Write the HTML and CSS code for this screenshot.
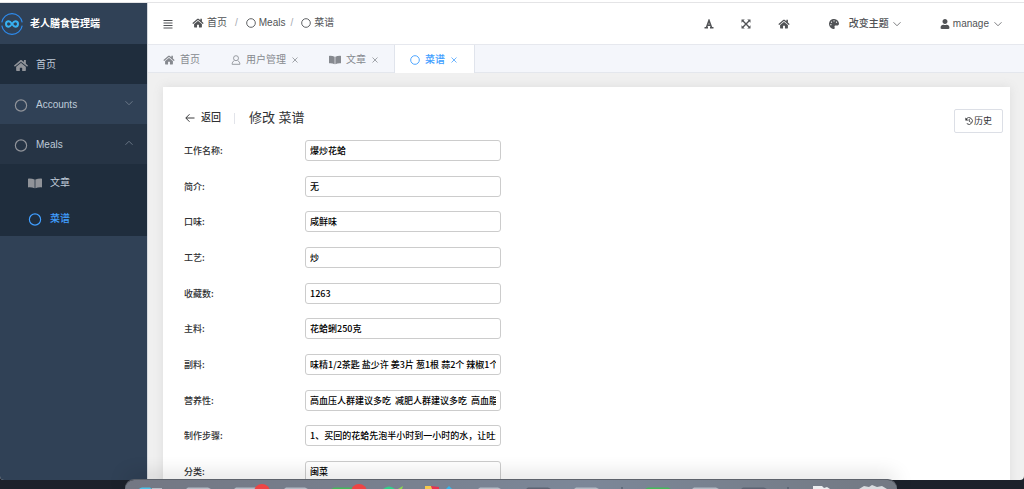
FILE: index.html
```html
<!DOCTYPE html>
<html lang="zh-CN">
<head>
<meta charset="utf-8">
<meta name="viewport" content="width=device-width, initial-scale=1">
<title>老人膳食管理端</title>
<link rel="stylesheet" href="styles.css">
</head>
<body>
<svg class="sprite" aria-hidden="true">
  <symbol id="home" viewBox="0 0 576 512"><path d="M488 312.700V456c0 13.300-10.700 24-24 24H348c-6.600 0-12-5.400-12-12V356c0-6.600-5.400-12-12-12h-72c-6.600 0-12 5.400-12 12v112c0 6.600-5.400 12-12 12H112c-13.300 0-24-10.700-24-24V312.700c0-3.600 1.600-7 4.400-9.300l188-154.800c4.400-3.600 10.800-3.600 15.300 0l188 154.800c2.700 2.300 4.300 5.700 4.300 9.300zm83.600-60.900L488 182.900V44.400c0-6.600-5.400-12-12-12h-56c-6.600 0-12 5.400-12 12V117l-89.500-73.700c-17.700-14.600-43.300-14.600-61 0L4.400 251.800c-5.100 4.200-5.800 11.800-1.600 16.900l25.500 31c4.200 5.100 11.800 5.800 16.900 1.600l235.200-193.700c4.400-3.600 10.800-3.600 15.300 0l235.200 193.700c5.100 4.200 12.700 3.500 16.900-1.600l25.500-31c4.200-5.200 3.400-12.700-1.700-16.900z" fill="currentColor"/></symbol>
  <symbol id="circle" viewBox="0 0 22 22"><circle cx="11" cy="11" r="9.500" fill="none" stroke="currentColor" stroke-width="2"/></symbol>
  <symbol id="book" viewBox="0 0 26 20"><path d="M0 2Q0 .8 1.200 .8C5 .6 9 1.200 12.300 2.800V19C9 17.500 5 17 1.200 17.200Q0 17.200 0 16ZM26 2Q26 .8 24.800 .8C21 .6 17 1.200 13.700 2.800V19C17 17.500 21 17 24.800 17.200Q26 17.200 26 16Z" fill="currentColor"/></symbol>
  <symbol id="person" viewBox="0 0 20 22"><g fill="none" stroke="currentColor" stroke-width="1.800"><circle cx="10" cy="7" r="5.500"/><path d="M6 12.500C3 14 1.500 17 1.500 20.500H18.500C18.500 17 17 14 14 12.500"/></g></symbol>
  <symbol id="user" viewBox="0 0 448 512"><path d="M224 256c70.700 0 128-57.300 128-128S294.700 0 224 0 96 57.300 96 128s57.300 128 128 128zm89.600 32h-16.700c-22.200 10.200-46.900 16-72.900 16s-50.600-5.800-72.900-16h-16.700C60.200 288 0 348.200 0 422.400V464c0 26.500 21.500 48 48 48h352c26.500 0 48-21.500 48-48v-41.600c0-74.200-60.200-134.400-134.400-134.400z" fill="currentColor"/></symbol>
  <symbol id="down" viewBox="0 0 16 16"><path d="M1 4.500L8 11.500L15 4.500" fill="none" stroke="currentColor" stroke-width="1.500"/></symbol>
  <symbol id="close" viewBox="0 0 12 12"><path d="M1 1L11 11M11 1L1 11" fill="none" stroke="currentColor" stroke-width="1.500"/></symbol>
  <symbol id="bars" viewBox="0 0 20 20"><path d="M1 3H19M1 8H19M1 13H19M1 18H19" stroke="currentColor" stroke-width="2"/></symbol>
  <symbol id="letter" viewBox="0 0 20 20"><path d="M5 17L10 3L15 17M7 12.500H13" fill="none" stroke="currentColor" stroke-width="3.200"/><path d="M1 17.600H8M12 17.600H19" stroke="currentColor" stroke-width="2.800"/></symbol>
  <symbol id="expand" viewBox="0 0 20 20"><path d="M4 4L16 16M16 4L4 16" stroke="currentColor" stroke-width="2.800"/><path d="M1 1H7.500L1 7.500ZM19 1V7.500L12.500 1ZM1 19V12.500L7.500 19ZM19 19H12.500L19 12.500Z" fill="currentColor"/></symbol>
  <symbol id="palette" viewBox="0 0 512 512"><path d="M204 5C105 24 25 104 5 203c-37 187 131 326 245 308 37-6 54-49 37-83-20-41 9-89 55-89h71c54 0 98-44 99-98C511 90 370-27 204 5zM96 320a32 32 0 1 1 0-64 32 32 0 0 1 0 64zm32-128a32 32 0 1 1 0-64 32 32 0 0 1 0 64zm128-64a32 32 0 1 1 0-64 32 32 0 0 1 0 64zm128 64a32 32 0 1 1 0-64 32 32 0 0 1 0 64z" fill="currentColor"/></symbol>
  <symbol id="back" viewBox="0 0 20 20"><path d="M19 10H2M9 2.500L1.500 10L9 17.500" fill="none" stroke="currentColor" stroke-width="1.900"/></symbol>
  <symbol id="history" viewBox="0 0 20 20"><path d="M3 5A8.500 8.500 0 1 1 4.500 16.500M10.500 5V10.500L14 13" fill="none" stroke="currentColor" stroke-width="2.200"/><path d="M1 1V8.500H8.500Z" fill="currentColor"/></symbol>
</svg>

<div class="window">
  <aside class="sidebar">
    <div class="brand">
      <svg class="brand-logo" viewBox="0 0 66 66" aria-hidden="true">
        <g fill="none" stroke="#2d8cf0" stroke-width="3.500">
          <path d="M2.400 28A31 31 0 0 1 63.600 28"/><path d="M2.400 38A31 31 0 0 0 63.600 38"/>
          <path d="M33 33C28 26 26 25 23 25A8 8 0 0 0 23 41C27 41 30 37 33 33C36 29 39 25 43 25A8 8 0 0 1 43 41C39 41 37 38 33 33" stroke="#38b2f2" stroke-width="6"/>
        </g>
      </svg>
      <span>老人膳食管理端</span>
    </div>
    <nav class="menu">
      <a class="item item-home" href="#"><svg class="icon-lg"><use href="#home"/></svg>首页</a>
      <a class="item" href="#"><svg class="icon-lg"><use href="#circle"/></svg>Accounts<svg class="arrow"><use href="#down"/></svg></a>
      <a class="item item-open" href="#"><svg class="icon-lg"><use href="#circle"/></svg>Meals<svg class="arrow arrow-up"><use href="#down"/></svg></a>
      <div class="submenu">
        <a class="item" href="#"><svg class="icon-lg"><use href="#book"/></svg>文章</a>
        <a class="item item-current" href="#"><svg class="icon-lg"><use href="#circle"/></svg>菜谱</a>
      </div>
    </nav>
  </aside>

  <div class="page">
    <header class="topbar">
      <button class="plain" aria-label="折叠菜单"><svg class="icon"><use href="#bars"/></svg></button>
      <nav class="crumbs">
        <a href="#"><svg class="icon-home"><use href="#home"/></svg>首页</a><span class="slash">/</span>
        <a href="#"><svg class="icon"><use href="#circle"/></svg>Meals</a><span class="slash slash-near">/</span>
        <a href="#"><svg class="icon"><use href="#circle"/></svg>菜谱</a>
      </nav>
      <div class="tools">
        <button class="plain" aria-label="字体"><svg class="icon"><use href="#letter"/></svg></button>
        <button class="plain" aria-label="全屏"><svg class="icon"><use href="#expand"/></svg></button>
        <button class="plain" aria-label="主页"><svg class="icon-home"><use href="#home"/></svg></button>
        <button class="plain theme"><svg class="icon"><use href="#palette"/></svg><span>改变主题</span><svg class="caret"><use href="#down"/></svg></button>
        <button class="plain account"><svg class="icon"><use href="#user"/></svg><span>manage</span><svg class="caret"><use href="#down"/></svg></button>
      </div>
    </header>

    <nav class="tabs">
      <a class="tab" href="#"><svg class="icon-home"><use href="#home"/></svg>首页</a>
      <a class="tab" href="#"><svg class="icon"><use href="#person"/></svg>用户管理<svg class="close"><use href="#close"/></svg></a>
      <a class="tab" href="#"><svg class="icon-home"><use href="#book"/></svg>文章<svg class="close"><use href="#close"/></svg></a>
      <a class="tab tab-active" href="#"><svg class="icon"><use href="#circle"/></svg>菜谱<svg class="close"><use href="#close"/></svg></a>
    </nav>

    <main class="content">
      <section class="card">
        <div class="card-head">
          <a class="back" href="#"><svg class="icon"><use href="#back"/></svg>返回</a>
          <h1>修改 菜谱</h1>
          <button class="history"><svg><use href="#history"/></svg>历史</button>
        </div>
        <form class="form">
          <div class="row"><label for="f1">工作名称:</label><input id="f1" type="text" value="爆炒花蛤"></div>
          <div class="row"><label for="f2">简介:</label><input id="f2" type="text" value="无"></div>
          <div class="row"><label for="f3">口味:</label><input id="f3" type="text" value="咸鲜味"></div>
          <div class="row"><label for="f4">工艺:</label><input id="f4" type="text" value="炒"></div>
          <div class="row"><label for="f5">收藏数:</label><input id="f5" type="text" value="1263"></div>
          <div class="row"><label for="f6">主料:</label><input id="f6" type="text" value="花蛤蜊250克"></div>
          <div class="row"><label for="f7">副料:</label><input id="f7" type="text" value="味精1/2茶匙 盐少许 姜3片 葱1根 蒜2个 辣椒1个"></div>
          <div class="row"><label for="f8">营养性:</label><input id="f8" type="text" value="高血压人群建议多吃  减肥人群建议多吃  高血脂人群建议多吃"></div>
          <div class="row"><label for="f9">制作步骤:</label><input id="f9" type="text" value="1、买回的花蛤先泡半小时到一小时的水，让吐沙"></div>
          <div class="row"><label for="f10">分类:</label><input id="f10" type="text" value="闽菜"></div>
        </form>
      </section>
    </main>
  </div>
</div>

<div class="dock">
  <svg class="dock-icons" viewBox="0 0 772 9" aria-hidden="true">
    <path d="M14 9Q15 7.500 17 7.500H25L27 9Z" fill="#4cc3ea"/>
    <path d="M27 9V8H37V9ZM61 9L63 7.500H83L86 9ZM109 9L111 7.500H131L133 9ZM159 9L161 7.500H180L183 9ZM353 9L355 7.500H373L376 9ZM449 9L451 7.500H471L474 9ZM567 9L569 7.500H591L594 9Z" fill="#b4bbc5"/>
    <path d="M401 9L403 7.500H423L426 9ZM616 9L618 7.500H639L642 9Z" fill="#5d6473"/>
    <path d="M206 9L209 7.500H228V9ZM520 9L523 7.500H543L546 9Z" fill="#42b95b"/>
    <circle cx="137" cy="12" r="8" fill="#ef4444"/><circle cx="234" cy="12" r="8" fill="#ef4444"/>
    <path d="M258 9Q264 4 270 9Z" fill="#2fd38a"/><path d="M273 9L278 6L277 9Z" fill="#8bdc4c"/>
    <path d="M300 6L306 6L308 9H300Z" fill="#f7c94b"/><path d="M306 6L314 7V9H307Z" fill="#e9334f"/><path d="M321 9L324 6L327 9Z" fill="#35b8ed"/>
    <path d="M497 7V9M663 7V9" stroke="#475060"/>
    <path d="M688 6H697L699 8L702 7L705 9H688Z" fill="#eceef0"/>
    <path d="M734 9L739 6L744 7L747 5L752 7L757 6L762 9Z" fill="#d9dcdf"/>
  </svg>
</div>
</body>
</html>
```
FILE: styles.css
```css
* { box-sizing: border-box; }

body {
  margin: 0;
  height: 100vh;
  overflow: hidden;
  display: flex;
  flex-direction: column;
  background: #1c212b;
  color: #303133;
  font: 10px/16px "Liberation Sans", "Noto Sans CJK SC", sans-serif;
}

a { color: inherit; text-decoration: none; }
svg { flex: none; display: block; }
button, input { font: inherit; color: inherit; }
.sprite { position: absolute; width: 0; height: 0; }

.window {
  flex: 1;
  min-height: 0;
  display: flex;
  margin-bottom: 9px;
  border-top: 2px solid #fff;
  border-radius: 0 0 4px 4px;
  background: #f0f0f0;
  overflow: hidden;
}

.icon { width: 10px; height: 10px; }
.icon-home { width: 12px; height: 10px; }
.icon-lg { width: 14px; height: 13px; }

/* Sidebar */
.sidebar {
  flex: none;
  width: 148px;
  border-top: 1px solid #e4e4e6;
  border-right: 1px solid #d5d9de;
  background: #304156;
  color: #bfcbd9;
}
.brand {
  display: flex;
  align-items: center;
  gap: 7px;
  height: 41px;
  padding-left: 1px;
  color: #fff;
  font-weight: 700;
}
.brand-logo { width: 22px; height: 22px; }
.item {
  display: flex;
  align-items: center;
  gap: 8px;
  height: 40px;
  padding: 2px 14px 0;
}
.item .icon-lg { color: #909399; }
.item-home { background: #1f2d3d; }
.item-open { background: #263445; }
.arrow { width: 8px; height: 8px; margin: 0 0 4px auto; color: #7f8b99; }
.arrow-up { transform: rotate(180deg); }
.submenu { background: #1f2d3d; }
.submenu .item { height: 36px; padding-left: 28px; }
.item-current, .item-current .icon-lg { color: #409eff; }
.item-current { font-weight: 500; }

/* Header */
.page { flex: 1; min-width: 0; display: flex; flex-direction: column; }
.topbar {
  flex: none;
  display: flex;
  align-items: center;
  height: 43px;
  padding: 0 22px 0 15px;
  border-top: 1px solid #e4e4e6;
  border-bottom: 1px solid #e6e8ee;
  background: #fff;
  color: #515356;
}
.plain {
  display: flex;
  align-items: center;
  padding: 0;
  border: 0;
  background: none;
}
.crumbs { display: flex; align-items: center; margin-left: 19px; padding-bottom: 2px; }
.crumbs a { display: flex; align-items: center; gap: 3px; }
.slash { margin: 0 8px; color: #a5a9b2; }
.slash-near { margin: 0 8px 0 5px; }
.tools { display: flex; align-items: center; margin-left: auto; gap: 27px; }
.theme { margin-left: 12px; }
.theme span { margin: 0 4px 0 10px; font-weight: 500; }
.account { margin-left: 12px; }
.account span { margin: 0 5px 0 3px; }
.caret { width: 8px; height: 8px; }

/* Open pages */
.tabs {
  flex: none;
  display: flex;
  height: 28px;
  border-bottom: 1px solid #e4e7ed;
  background: #f4f6fb;
  color: #86898f;
}
.tab {
  display: flex;
  align-items: center;
  gap: 5px;
  height: 28px;
  padding: 2px 15px 0;
  border: solid transparent;
  border-width: 0 1px 0 0;
}
.tab-active {
  padding-right: 17px;
  border-width: 0 1px;
  border-color: #e0e4ec;
  background: #fff;
  color: #409eff;
  font-weight: 500;
}
.close { width: 6px; height: 6px; margin-left: 1px; }

/* Edit form */
.content { flex: 1; min-height: 0; padding: 14px 14px 0 15px; }
.card {
  padding: 22px 7px 0 21px;
  background: #fff;
  box-shadow: 0 0 10px #dcdcdc;
}
.card-head { display: flex; align-items: flex-start; height: 23px; }
.back {
  display: flex;
  align-items: center;
  gap: 6px;
  margin: 1px 0 0 1px;
  padding-right: 14px;
  font-weight: 500;
}
.back::after { content: ""; height: 11px; margin-left: 7px; border-left: 1px solid #e2e4ea; }
h1 { margin: 0; font-size: 13px; line-height: 18px; font-weight: 400; }
.history {
  display: flex;
  align-items: center;
  justify-content: center;
  gap: 1px;
  width: 49px;
  height: 24px;
  margin-left: auto;
  padding: 0;
  border: 1px solid #dcdfe6;
  border-radius: 2px;
  background: #fff;
  font-size: 9px;
}
.history svg { width: 8px; height: 8px; }
.row {
  display: flex;
  align-items: center;
  height: 36px;
  font-family: "Noto Sans CJK SC", sans-serif;
  font-size: 9px;
  font-weight: 500;
}
.row:nth-child(3n) { height: 35px; }
.row label { width: 121px; padding-top: 1px; }
.row input {
  width: 196px;
  height: 21px;
  padding: 0 4px;
  border: 1px solid #ccc;
  border-radius: 3px;
  background: transparent;
  color: #000;
}

/* Dock laid over the bottom edge of the desktop */
.dock {
  position: fixed;
  left: 50%;
  bottom: 0;
  width: 772px;
  height: 9px;
  margin-left: -387px;
  border-radius: 9px 9px 0 0;
  background: linear-gradient(90deg, #737783, #7c8798 60%, #737983);
  box-shadow: 0 -1px 0 #5d626b, 0 -4px 20px rgba(0, 0, 0, .2);
}
.dock-icons { width: 772px; height: 9px; }
```
